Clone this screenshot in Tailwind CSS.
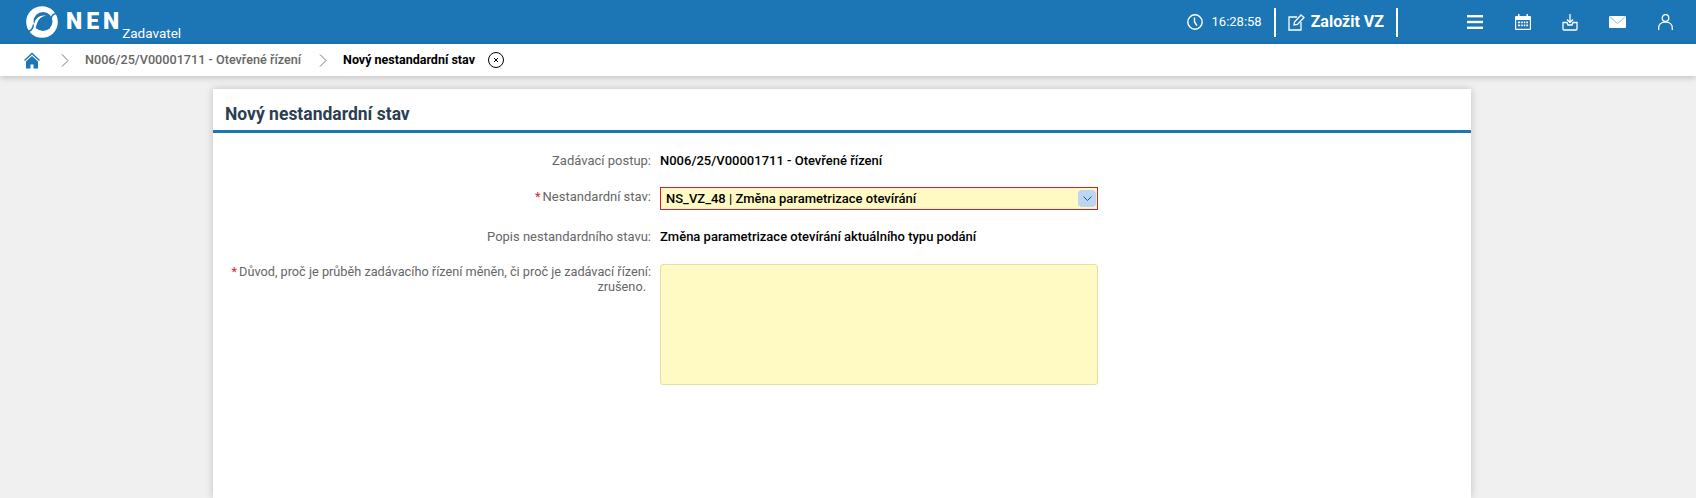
<!DOCTYPE html>
<html lang="cs">
<head>
    <meta charset="UTF-8">
    <meta name="viewport" content="width=device-width, initial-scale=1.0">
    <title>Nový nestandardní stav</title>
    <script src="https://cdn.jsdelivr.net/npm/@tailwindcss/browser@4"></script>
</head>
<body class="bg-[#f0f0f0] font-[Roboto,sans-serif] text-[13px] text-black">
    <header class="flex h-[44px] items-center bg-[#1c75b4] pl-[26px] text-white">
        <svg class="h-[32px] w-[32px]" viewBox="0 0 32 32">
            <circle cx="16" cy="16" r="15.800" fill="#fff"/>
            <circle cx="17" cy="15.500" r="9.500" fill="#1c75b4"/>
            <path d="M32 7.500C27.500 7 25.500 9.500 25 13M0 25.500c4.500.500 7-2.500 7.500-7" fill="none" stroke="#1c75b4" stroke-width="1.500"/>
            <path d="M8.500 23c-1.500-5 .500-11 6-13 2-.700 4-.700 5.500-.200-4.500.700-7.500 3.200-8.800 7.200-.600 2.200-1.200 4-2.700 6z" fill="#fff"/>
        </svg>
        <div class="mb-[2px] ml-[8px] text-[23px] leading-none font-black tracking-[4px]">NEN</div>
        <div class="mt-[23px] ml-[-1px] text-[13.500px] leading-none">Zadavatel</div>

        <div class="ml-auto flex items-center">
            <svg class="h-[16px] w-[16px]" viewBox="0 0 16 16" fill="none" stroke="#fff" stroke-width="1.400"><circle cx="8" cy="8" r="7.200"/><path d="M7.500 3.500V8l2.500 3.500"/></svg>
            <span class="ml-[9px] text-[13px]">16:28:58</span>
            <div class="ml-[12px] h-[29px] w-[2px] bg-white"></div>
            <svg class="ml-[12px] h-[17px] w-[17px]" viewBox="0 0 17 17" fill="none" stroke="#fff" stroke-width="1.300"><path d="M9 3H1v13h12V8"/><path d="M6 11l.500-3L13 1l3 2.500-6.500 7z"/></svg>
            <span class="ml-[6px] text-[16px] font-bold">Založit VZ</span>
            <div class="ml-[12px] h-[29px] w-[2px] bg-white"></div>
            <svg class="ml-[69px] h-[14px] w-[16px]" viewBox="0 0 16 14" fill="#fff"><rect width="16" height="2.400"/><rect y="5.800" width="16" height="2.400"/><rect y="11.600" width="16" height="2.400"/></svg>
            <svg class="ml-[32px] h-[16px] w-[16px]" viewBox="0 0 16 16" fill="#fff"><path d="M1 2h2V0h1.500v2h7V0H13v2h2a1 1 0 0 1 1 1v12a1 1 0 0 1-1 1H1a1 1 0 0 1-1-1V3a1 1 0 0 1 1-1zm.200 4v8.800h13.600V6z"/><path d="M3 7.500h2.200v1.700H3zm3.200 0h1.600v1.700H6.200zm2.600 0h1.600v1.700H8.800zm2.500 0h1.700v1.700h-1.700zM3 10.500h2.200v1.700H3zm3.200 0h1.600v1.700H6.200zm2.600 0h1.600v1.700H8.800zm2.500 0h1.700v1.700h-1.700z"/></svg>
            <svg class="ml-[31px] h-[17px] w-[16px]" viewBox="0 0 16 17" fill="none" stroke="#fff" stroke-width="1.300"><path d="M8 0v8M5 5.500 8 8.500l3-3"/><path d="M5 8.500H1v6.500a1 1 0 0 0 1 1h12a1 1 0 0 0 1-1V8.500h-4l-1 2.500H6z"/></svg>
            <svg class="ml-[31px] h-[12px] w-[17px]" viewBox="0 0 17 12"><rect width="17" height="12" rx="1" fill="#fff"/><path d="M.500.500 8.500 7.500l8-7" fill="none" stroke="#8cbde0"/></svg>
            <svg class="mr-[23px] ml-[32px] h-[16px] w-[15px]" viewBox="0 0 15 16" fill="none" stroke="#fff" stroke-width="1.300"><circle cx="7.500" cy="4" r="3.300"/><path d="M.700 16v-2.500c0-3 2.500-5.500 6.800-5.500s6.800 2.500 6.800 5.500V16"/></svg>
        </div>
    </header>

    <nav class="relative z-10 flex h-[32px] items-center bg-white pl-[24px] shadow-[0_2px_6px_rgba(0,0,0,0.18)]">
        <svg class="h-[17px] w-[16px]" viewBox="0 0 16 16" fill="#1c75b4"><path d="M8 0 0 7.500l1 1L8 2l7 6.500 1-1z"/><path d="M8 3.500 2 9v7h4.500v-4h3v4H14V9z"/></svg>
        <svg class="ml-[21px] h-[13px] w-[8px]" viewBox="0 0 8 13" fill="none" stroke="#777" stroke-width="1"><path d="M1 .500 7 6.500l-6 6"/></svg>
        <span class="ml-[16px] text-[12.650px] font-medium text-[#666]">N006/25/V00001711 - Otevřené řízení</span>
        <svg class="ml-[18px] h-[13px] w-[8px]" viewBox="0 0 8 13" fill="none" stroke="#777" stroke-width="1"><path d="M1 .500 7 6.500l-6 6"/></svg>
        <span class="ml-[16px] text-[12.500px] font-bold">Nový nestandardní stav</span>
        <svg class="ml-[13px] h-[16px] w-[16px]" viewBox="0 0 16 16" fill="none" stroke="#000" stroke-width="1"><circle cx="8" cy="8" r="7.500"/><path d="M6 6l4 4M10 6l-4 4"/></svg>
    </nav>

    <main class="mt-[13px] ml-[213px] h-[409px] w-[1258px] bg-white shadow-[0_0_8px_rgba(0,0,0,0.2)]">
        <h1 class="h-[44px] border-b-[3px] border-[#1c75b4] pt-[14px] pl-[12px] text-[17.500px] leading-[22px] font-bold text-[#2c3e50]">Nový nestandardní stav</h1>

        <div class="grid grid-cols-[438px_438px] gap-x-[9px] pt-[19px]">
            <div class="text-right leading-[18px] text-[#666]">Zadávací postup:</div>
            <div class="leading-[18px] font-medium">N006/25/V00001711 - Otevřené řízení</div>

            <div class="mt-[17px] pt-[1px] text-right leading-[18px] text-[#666]"><span class="mr-[2px] text-[#e01b2f]">*</span>Nestandardní stav:</div>
            <div class="relative mt-[17px] flex h-[23px] items-center border border-[#e01b2f] bg-[#fff9c4] pl-[5px] font-medium">NS_VZ_48 | Změna parametrizace otevírání
                <div class="absolute top-[2px] right-[1px] flex h-[17px] w-[18px] items-center justify-center rounded-[4px] bg-[#bcd5f0]">
                    <svg class="h-[5px] w-[9px]" viewBox="0 0 9 5" fill="none" stroke="#1c5a90"><path d="M.500.500l4 4 4-4"/></svg>
                </div>
            </div>

            <div class="mt-[18px] text-right leading-[18px] text-[#666]">Popis nestandardního stavu:</div>
            <div class="mt-[18px] leading-[18px] font-medium">Změna parametrizace otevírání aktuálního typu podání</div>

            <div class="mt-[18px] text-right text-[12.720px] leading-[15px] text-[#666]"><span class="mr-[2px] text-[#e01b2f]">*</span>Důvod, proč je průběh zadávacího řízení měněn, či proč je zadávací řízení: <span class="block pr-[5px]">zrušeno.</span></div>
            <div class="mt-[18px] h-[121px] rounded-[3px] border border-[#e5dfa0] bg-[#fff9c4]"></div>
        </div>
    </main>
</body>
</html>
